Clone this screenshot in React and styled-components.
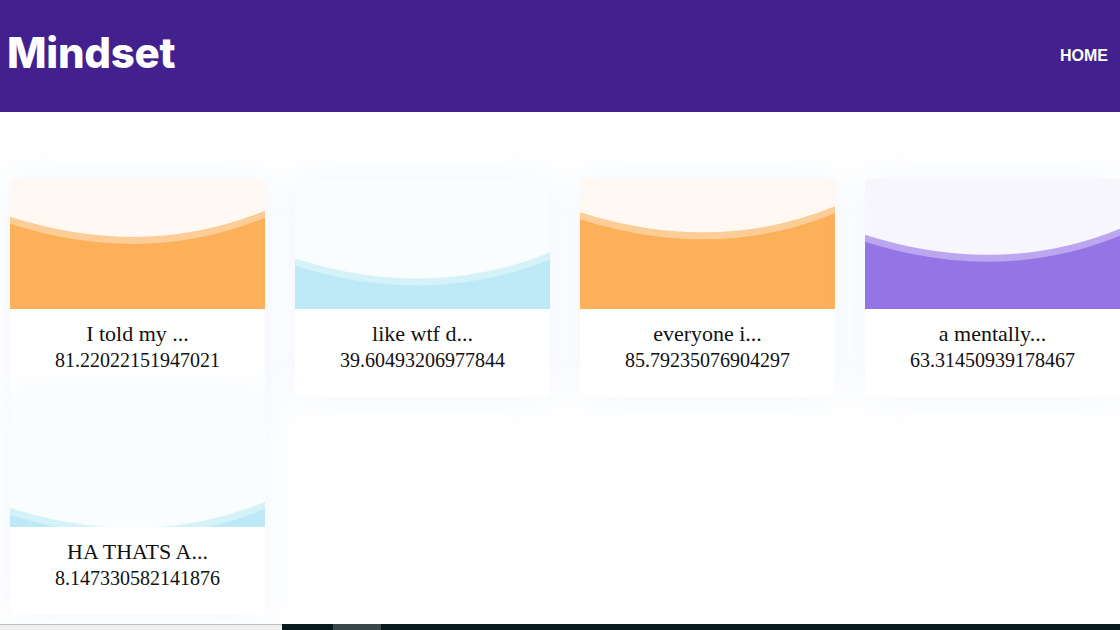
import React from "react";
import styled, { createGlobalStyle } from "styled-components";

const GlobalStyle = createGlobalStyle`
  body {
    margin: 0;
    background: #ffffff;
    font-family: "Liberation Sans", Arial, sans-serif;
    overflow: hidden;
  }
`;

const Header = styled.header`
  height: 112px;
  background: #42218e;
  display: flex;
  align-items: center;
  justify-content: space-between;
  padding: 0 12px 0 7px;
`;

const Logo = styled.h1`
  margin: 0 0 8px 0;
  font-family: Inter, "Liberation Sans", sans-serif;
  font-size: 42px;
  font-weight: 800;
  color: #ffffff;
  letter-spacing: -0.3px;
`;

const NavLink = styled.a`
  color: #ffffff;
  font-size: 16px;
  font-weight: 700;
  text-decoration: none;
`;

const Grid = styled.main`
  display: grid;
  grid-template-columns: repeat(4, 255px);
  grid-auto-rows: 218px;
  align-content: start;
  column-gap: 30px;
  padding: 67px 0 0 10px;
  height: 446px;
`;

const Card = styled.div`
  width: 255px;
  background: #ffffff;
  border-radius: 3px;
  overflow: hidden;
  box-shadow: 0 0 36px rgba(205, 222, 248, 0.3);
  display: flex;
  flex-direction: column;
`;

const Art = styled.svg`
  display: block;
  width: 255px;
  height: 130px;
  background: ${(p) => p.$bg};
`;

const Body = styled.div`
  flex: 1;
  padding-top: 12px;
  text-align: center;
  font-family: "Liberation Serif", "Times New Roman", serif;
  color: #111111;
`;

const Title = styled.div`
  font-size: 22px;
  line-height: 26px;
`;

const Score = styled.div`
  font-size: 20px;
  line-height: 26px;
`;

const Footer = styled.footer`
  margin-top: -1px;
  display: flex;
  height: 6px;
`;

const Track = styled.div`
  width: 282px;
  background: #f0f0f0;
  border-top: 1px solid #bdbdbd;
`;

const Dark = styled.div`
  flex: 1;
  background: #08181c;
  display: flex;
`;

const Thumb = styled.div`
  margin-left: 51px;
  width: 48px;
  background: #3a474a;
`;

const palettes = {
  orange: { bg: "#fff8f3", band: "#fdcd98", fill: "#fdb05a" },
  blue: { bg: "#f9fdfe", band: "#d6f2f9", fill: "#bdeaf6" },
  purple: { bg: "#f8f6fd", band: "#bba6ef", fill: "#9575e5" },
};

const posts = [
  { title: "I told my ...", score: "81.22022151947021", tone: "orange" },
  { title: "like wtf d...", score: "39.60493206977844", tone: "blue" },
  { title: "everyone i...", score: "85.79235076904297", tone: "orange" },
  { title: "a mentally...", score: "63.31450939178467", tone: "purple" },
  { title: "HA THATS A...", score: "8.147330582141876", tone: "blue" },
];

const wave = (v, lift) => {
  const left = 130 - (v + 4) - lift;
  const right = 130 - (v + 10) - lift;
  const ctrl = 130 - v + 39 - lift;
  return `M0,${left} Q135,${ctrl} 255,${right} L255,130 L0,130 Z`;
};

const Liquid = ({ value, tone }) => {
  const c = palettes[tone];
  return (
    <Art $bg={c.bg} viewBox="0 0 255 130" preserveAspectRatio="none">
      <path d={wave(value, 7)} fill={c.band} />
      <path d={wave(value, 0)} fill={c.fill} />
    </Art>
  );
};

export default function App() {
  return (
    <>
      <GlobalStyle />
      <Header>
        <Logo>Mindset</Logo>
        <NavLink href="#">HOME</NavLink>
      </Header>
      <Grid>
        {posts.map((p) => (
          <Card key={p.score}>
            <Liquid value={parseFloat(p.score)} tone={p.tone} />
            <Body>
              <Title>{p.title}</Title>
              <Score>{p.score}</Score>
            </Body>
          </Card>
        ))}
      </Grid>
      <Footer>
        <Track />
        <Dark>
          <Thumb />
        </Dark>
      </Footer>
    </>
  );
}
